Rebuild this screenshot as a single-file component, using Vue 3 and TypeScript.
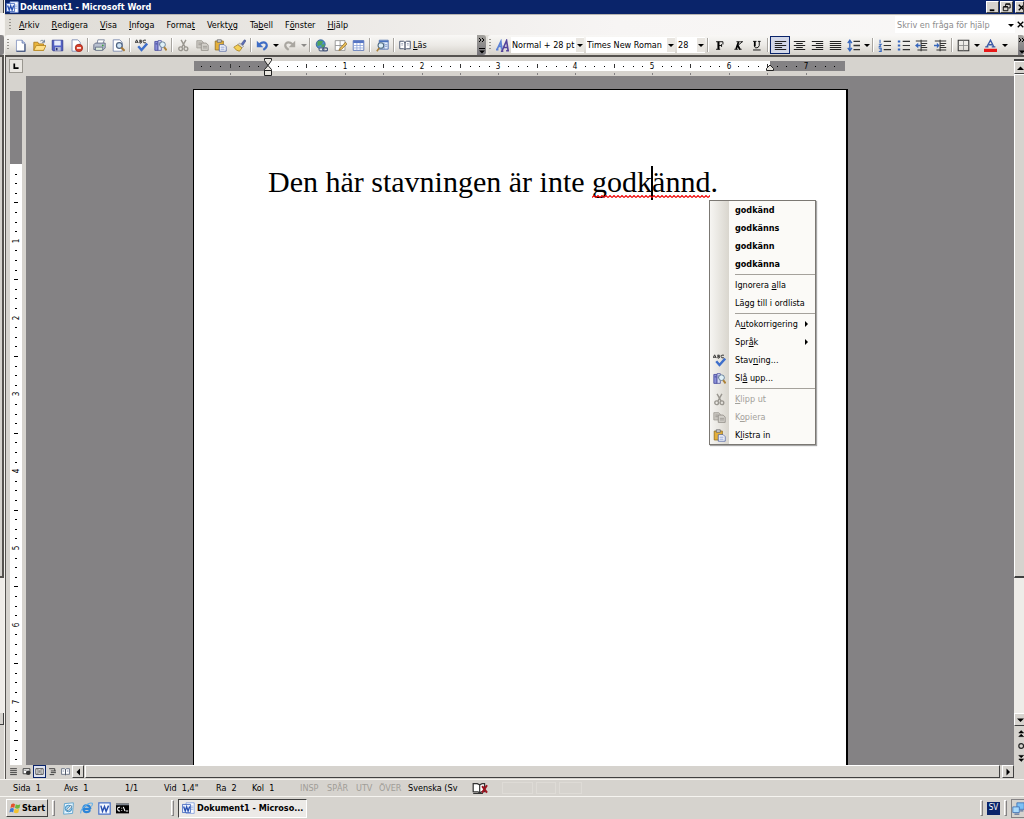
<script setup lang="ts">
import { ref } from 'vue'

interface ToolButton { icon: string; title: string; drop?: boolean; wide?: boolean; active?: boolean; off?: boolean }
interface ToolGroup { name: string; items: ToolButton[] }
interface MenuEntry { label: string; bold?: boolean; sub?: boolean; off?: boolean; icon?: string }
interface Mark { pos: number; kind: 'num' | 'half' | 'dot'; text: string }

const menus = ['&Arkiv', '&Redigera', '&Visa', '&Infoga', 'Forma&t', 'Verkt&yg', 'Ta&bell', 'F&önster', '&Hjälp']

const standard: ToolGroup[] = [
  { name: 'four', items: [
    { icon: 'new', title: 'Nytt' }, { icon: 'open', title: 'Öppna' },
    { icon: 'save', title: 'Spara' }, { icon: 'perm', title: 'Behörighet' } ] },
  { name: 'two', items: [{ icon: 'print', title: 'Skriv ut' }, { icon: 'preview', title: 'Förhandsgranska' }] },
  { name: 'two', items: [{ icon: 'spell', title: 'Stavning' }, { icon: 'research', title: 'Referensmaterial' }] },
  { name: 'four', items: [
    { icon: 'cut', title: 'Klipp ut', off: true }, { icon: 'copy', title: 'Kopiera', off: true },
    { icon: 'paste', title: 'Klistra in' }, { icon: 'brush', title: 'Hämta format' } ] },
  { name: 'undo', items: [
    { icon: 'undo', title: 'Ångra', drop: true }, { icon: 'redo', title: 'Gör om', drop: true, off: true } ] },
  { name: 'three', items: [
    { icon: 'link', title: 'Hyperlänk' }, { icon: 'draw', title: 'Tabeller och kantlinjer' },
    { icon: 'table', title: 'Infoga tabell' } ] },
  { name: 'one', items: [{ icon: 'docmap', title: 'Dokumentöversikt' }] }
]

const formatting: ToolGroup[] = [
  { name: 'font', items: [
    { icon: 'bold', title: 'Fet' }, { icon: 'italic', title: 'Kursiv' }, { icon: 'under', title: 'Understruken' } ] },
  { name: 'align', items: [
    { icon: 'left', title: 'Vänsterjustera', active: true }, { icon: 'center', title: 'Centrera' },
    { icon: 'right', title: 'Högerjustera' }, { icon: 'justify', title: 'Marginaljustera' },
    { icon: 'spacing', title: 'Radavstånd', drop: true } ] },
  { name: 'four', items: [
    { icon: 'numbers', title: 'Numrerad lista' }, { icon: 'bullets', title: 'Punktlista' },
    { icon: 'outdent', title: 'Minska indrag' }, { icon: 'indent', title: 'Öka indrag' } ] },
  { name: 'undo', items: [
    { icon: 'borders', title: 'Kantlinje', drop: true }, { icon: 'color', title: 'Teckenfärg', drop: true } ] }
]

const context: MenuEntry[][] = [
  [{ label: 'godkänd', bold: true }, { label: 'godkänns', bold: true },
    { label: 'godkänn', bold: true }, { label: 'godkänna', bold: true }],
  [{ label: 'Ignorera &alla' }, { label: 'Lägg till i ordlista' }],
  [{ label: 'A&utokorrigering', sub: true }, { label: 'Spr&åk', sub: true },
    { label: 'Stav&ning...', icon: 'spell' }, { label: 'Sl&å upp...', icon: 'research' }],
  [{ label: '&Klipp ut', off: true, icon: 'cut' }, { label: 'K&opiera', off: true, icon: 'copy' },
    { label: 'K&listra in', icon: 'paste' }]
]

const views = ['v-normal', 'v-web', 'v-print', 'v-outline', 'read']
const viewNames = ['Normal', 'Webblayout', 'Utskriftslayout', 'Disposition', 'Läslayout']
const launch = ['desktop', 'ie', 'word', 'cmd']
const launchNames = ['Visa skrivbordet', 'Internet Explorer', 'Word', 'Kommandotolken']
const status = ['Sida  1', 'Avs  1', '1/1', 'Vid  1,4"', 'Ra  2', 'Kol  1']
const modes = ['INSP', 'SPÅR', 'UTV', 'ÖVER']

const styleName = ref('Normal + 28 pt')
const fontName = ref('Times New Roman')
const fontSize = ref('28')
const question = ref('')

function parts(label: string): string[] {
  const i = label.indexOf('&')
  return i < 0 ? [label, '', ''] : [label.slice(0, i), label[i + 1], label.slice(i + 2)]
}

const inch = 76.8
function marks(origin: number, from: number, to: number): Mark[] {
  const out: Mark[] = []
  for (let k = from; k <= to; k++) {
    if (k === 0) continue
    const kind = k % 8 === 0 ? 'num' : k % 4 === 0 ? 'half' : 'dot'
    out.push({ pos: Math.round(origin + (k * inch) / 8), kind, text: String(Math.abs(k / 8)) })
  }
  return out
}
const across = marks(74, -7, 59)
const down = marks(73, 1, 63)
</script>

<template>
  <div class="screen">
    <svg class="defs" aria-hidden="true">
      <symbol id="new" viewBox="0 0 16 16"><path d="M3 1.500h7l3.500 3.500v10h-10.500z" fill="#fff" stroke="#7f8fbd" /><path d="M10 1.500v3.500h3.500" fill="#c9d6f2" stroke="#5b6fa5" /><path d="M3 15h10.500V6" fill="none" stroke="#33456f" stroke-width="1.300" /></symbol>
      <symbol id="open" viewBox="0 0 16 16"><path d="M1 14V4h5l1 2h6v8z" fill="#e9b43c" stroke="#a9781a" /><path d="M1 14l3-6h12l-3 6z" fill="#ffe08a" stroke="#b3841f" /><path d="M9 2.500c2-1.500 4-1 5 1.500M14 1v3h-3" fill="none" stroke="#5b6f8a" /></symbol>
      <symbol id="save" viewBox="0 0 16 16"><path d="M1.500 1.500h13v13h-12l-1-1z" fill="#5360c4" stroke="#303a8e" /><path d="M4 2h8v6H4z" fill="#e6ebfb" /><path d="M5 10h7v4.500H5z" fill="#b9bfd6" /><path d="M6 11h2v3H6z" fill="#2b3377" /></symbol>
      <symbol id="perm" viewBox="0 0 16 16"><path d="M2.500 1h7l3 3v11h-10z" fill="#fff" stroke="#7181ac" /><circle cx="11" cy="11" r="4.500" fill="#d8402c" stroke="#9d2517" /><path d="M8.500 11h5" stroke="#fff" stroke-width="2" /></symbol>
      <symbol id="print" viewBox="0 0 16 16"><path d="M5 6l1-5h8l-2 5z" fill="#fff" stroke="#6b7690" /><path d="M1 7l2-2h12v6l-2 2H1z" fill="#b8c0cf" stroke="#59647e" /><path d="M3 10h9v4H3z" fill="#dcebd9" stroke="#59647e" /><path d="M11 8h2" stroke="#3c9c3c" stroke-width="2" /></symbol>
      <symbol id="preview" viewBox="0 0 16 16"><path d="M1.500 1h8l3 3v11h-11z" fill="#fff" stroke="#6f7fa8" /><circle cx="9" cy="8" r="3.500" fill="#cfe4f6" stroke="#4f6380" stroke-width="1.500" /><path d="M11.500 10.500l4 4" stroke="#a97a35" stroke-width="2.400" /></symbol>
      <symbol id="spell" viewBox="0 0 16 16"><path d="M0 5l2-4 2 4M1 4h2.500M6 1v4M6 1.500h2q1.500 1 0 1.500H6.500q3 1 1 2H6M13.500 1.500q-3.500-1-3.500 1.500t3.500 1.700" fill="none" stroke="#343434" stroke-width="1.200" /><path d="M4 9l4 4.500L15 5.500" fill="none" stroke="#3e6fcb" stroke-width="3" /></symbol>
      <symbol id="research" viewBox="0 0 16 16"><path d="M1 3h4v11H1z" fill="#8a8fd8" stroke="#45499c" /><path d="M5 2h4v12H5z" fill="#d9dcf6" stroke="#5357a3" /><path d="M2 6h2M6 5h2M6 7h2" stroke="#343a82" /><circle cx="10.500" cy="7" r="3.500" fill="#dff0f8" stroke="#55708a" /><path d="M12.500 10l3 4" stroke="#ad8238" stroke-width="2.300" /></symbol>
      <symbol id="cut" viewBox="0 0 16 16"><path d="M5 1l5 9M11 1L6 10" stroke="#99968f" stroke-width="1.700" /><circle cx="4.500" cy="12" r="2.300" fill="none" stroke="#99968f" stroke-width="1.700" /><circle cx="11" cy="12" r="2.300" fill="none" stroke="#99968f" stroke-width="1.700" /></symbol>
      <symbol id="copy" viewBox="0 0 16 16"><path d="M1 2h6l2 2v7H1z" fill="#c9c6c0" stroke="#a09d96" /><path d="M6.500 5h6l2.500 2.500V14H6.500z" fill="#d3d0ca" stroke="#908d86" /><path d="M3 5h3M3 7h3M8.500 9h5M8.500 11h5" stroke="#96938c" /></symbol>
      <symbol id="paste" viewBox="0 0 16 16"><path d="M1.500 2.500h10v11h-10z" fill="#e5b03a" stroke="#94701f" /><path d="M4 1h5v3H4z" fill="#d7d9e1" stroke="#666" /><path d="M6.500 7h6l2.500 2.500V15H6.500z" fill="#fff" stroke="#4d63a3" /><path d="M8 10h5M8 12.500h5" stroke="#6d86c9" /></symbol>
      <symbol id="brush" viewBox="0 0 16 16"><path d="M10 6l4-5 2 1-4 6z" fill="#5c6eb8" stroke="#3b4780" stroke-width=".7" /><path d="M8 5l5 4-2 2-5-4z" fill="#d8d8dc" stroke="#777" stroke-width=".7" /><path d="M6 7l5 4-3 4q-4 0-7-5z" fill="#f4cf55" stroke="#a9822a" /></symbol>
      <symbol id="undo" viewBox="0 0 16 16"><path d="M4 6.500q5-4 8.500-1 2.500 4-3.500 8" fill="none" stroke="#3f6dc5" stroke-width="2.600" /><path d="M1 2v8h8z" fill="#3f6dc5" /></symbol>
      <symbol id="redo" viewBox="0 0 16 16"><path d="M12 6.500q-5-4-8.500-1-2.500 4 3.500 8" fill="none" stroke="#aaa7a1" stroke-width="2.600" /><path d="M15 2v8H7z" fill="#aaa7a1" /></symbol>
      <symbol id="link" viewBox="0 0 16 16"><circle cx="7" cy="6.500" r="5.500" fill="#4d8ccf" stroke="#2f5c93" /><path d="M3 3q3-2 7 0l-2 4-3 1-2 1zM8 7l4-1-1 4-3 1z" fill="#50a45a" /><rect x="5" y="11" width="6" height="3.500" rx="1.700" fill="#e8ecf4" stroke="#63718e" stroke-width="1.500" /><rect x="9.500" y="11" width="6" height="3.500" rx="1.700" fill="none" stroke="#44557c" stroke-width="1.500" /></symbol>
      <symbol id="draw" viewBox="0 0 16 16"><path d="M1.500 2h12v12h-12zM1.500 8h12M7.500 2v12" fill="#fff" stroke="#8a8a8a" /><path d="M7 12l7-8 2 2-7 7-3 1z" fill="#eac05a" stroke="#94702b" /></symbol>
      <symbol id="table" viewBox="0 0 16 16"><path d="M1.500 2h13v12h-13z" fill="#fff" stroke="#4865b2" /><path d="M1.500 2h13v3h-13z" fill="#5575c4" /><path d="M1.500 8h13M1.500 11h13M6 5v9M10 5v9" stroke="#8ea5da" /></symbol>
      <symbol id="docmap" viewBox="0 0 16 16"><path d="M4 1.500h11v11H4z" fill="#e4eefb" stroke="#4365a9" /><path d="M4 3h11" stroke="#4a72bd" stroke-width="2" /><path d="M10 5v8M11 7h3M11 9h3" stroke="#7692c6" /><circle cx="6" cy="8" r="3.500" fill="#dceef7" stroke="#4f6a82" stroke-width="1.300" /><path d="M4 11l-3 4" stroke="#ad8238" stroke-width="2" /></symbol>
      <symbol id="read" viewBox="0 0 16 16"><path d="M1 3h5l2 1.500L10 3h5v10h-5l-2 1-2-1H1z" fill="#fff" stroke="#4a5670" stroke-width="1.300" /><path d="M8 4v10" stroke="#333c50" stroke-width="1.500" /><path d="M3 6h2.500M3 8h2.500M10.500 6H13M10.500 8H13" stroke="#8f99b0" /></symbol>
      <symbol id="styles" viewBox="0 0 16 16"><path d="M0 13h3M1.500 12.500L6 3l1 10M3 9h5" fill="none" stroke="#5b82d6" stroke-width="2" /><path d="M6 15h3M7.500 14.500L13 2l2 12.500M9.500 10.500H15M12.500 14.500H16" fill="none" stroke="#54459c" stroke-width="2" /></symbol>
      <symbol id="bold" viewBox="0 0 16 16"><path d="M3 2.500h10v4M3 13.500h6M7 8h4M11 6v4" fill="none" stroke="#000" stroke-width="1.300" /><path d="M6.500 2.500v11" stroke="#000" stroke-width="3" /></symbol>
      <symbol id="italic" viewBox="0 0 16 16"><path d="M5 2.500h5M10.500 2.500h4M2 13.500h5M8.500 13.500h4" stroke="#000" stroke-width="1.300" /><path d="M8 3L4.500 13M7 8l3 5.500" fill="none" stroke="#000" stroke-width="2.500" /><path d="M13 3L7 8" stroke="#000" stroke-width="1.300" /></symbol>
      <symbol id="under" viewBox="0 0 16 16"><path d="M3 2h5M10 2h4M12 2v6q-1 4-5 3.500-2-.5-2-3.500" fill="none" stroke="#000" stroke-width="1.300" /><path d="M5.500 2v7" stroke="#000" stroke-width="2.600" /><path d="M3 14.500h11" stroke="#000" stroke-width="1.300" /></symbol>
      <symbol id="left" viewBox="0 0 16 16"><path d="M1 3h14M1 5.500h9M1 8h14M1 10.500h9M1 13h14" stroke="#222" stroke-width="1.300" /></symbol>
      <symbol id="center" viewBox="0 0 16 16"><path d="M1 3h14M4 5.500h8M1 8h14M4 10.500h8M1 13h14" stroke="#222" stroke-width="1.300" /></symbol>
      <symbol id="right" viewBox="0 0 16 16"><path d="M1 3h14M6 5.500h9M1 8h14M6 10.500h9M1 13h14" stroke="#222" stroke-width="1.300" /></symbol>
      <symbol id="justify" viewBox="0 0 16 16"><path d="M1 3h14M1 5.500h14M1 8h14M1 10.500h14M1 13h14" stroke="#222" stroke-width="1.300" /></symbol>
      <symbol id="spacing" viewBox="0 0 16 16"><path d="M3.500 2v12M1 5l2.500-3.500L6 5M1 11l2.500 3.500L6 11" fill="none" stroke="#3767bd" stroke-width="1.700" /><path d="M8 3h8M8 8h8M8 13h8" stroke="#333" stroke-width="1.600" /></symbol>
      <symbol id="numbers" viewBox="0 0 16 16"><path d="M2.500 1v4M1 6.500h3L1.500 9.500H4M1 11.500h3v4H1M2 13.500h2" fill="none" stroke="#3767bd" stroke-width="1.300" /><path d="M7 3h9M7 8h9M7 13h9" stroke="#333" stroke-width="1.500" /></symbol>
      <symbol id="bullets" viewBox="0 0 16 16"><path d="M1 3h3M1 8h3M1 13h3" stroke="#3767bd" stroke-width="2.600" /><path d="M7 3h9M7 8h9M7 13h9" stroke="#333" stroke-width="1.500" /></symbol>
      <symbol id="outdent" viewBox="0 0 16 16"><path d="M1 2.500h14M8 5.500h7M8 8h5M8 10.500h7M3 13.500h12M7.500 1v14" stroke="#333" stroke-width="1.300" /><path d="M0 8l4-3.500V7h3v2H4v2.500z" fill="#3767bd" /></symbol>
      <symbol id="indent" viewBox="0 0 16 16"><path d="M1 2.500h14M8 5.500h7M8 8h5M8 10.500h7M3 13.500h12M7.500 1v14" stroke="#333" stroke-width="1.300" /><path d="M7 8L3.500 4.500V7H0v2h3.500v2.500z" fill="#3767bd" /></symbol>
      <symbol id="borders" viewBox="0 0 16 16"><path d="M1.500 1.500h13v13h-13z" fill="none" stroke="#333" stroke-width="1.300" /><path d="M8 2v12M2 8h12" stroke="#888" /></symbol>
      <symbol id="color" viewBox="0 0 16 16"><path d="M3.500 9.500L8 1.500l4 8M5 7h6M1.500 9.700h4M9.500 9.700h4.500" fill="none" stroke="#3c5aa6" stroke-width="1.700" /><path d="M0 12h16v4H0z" fill="#e81818" /></symbol>
      <symbol id="word" viewBox="0 0 16 16"><path d="M5 1h10v13H5z" fill="#fff" stroke="#7f9bdc" /><path d="M11 5h3M11 7h3M11 9h3" stroke="#8fa8e0" /><path d="M.5 3h10v10H.5z" fill="#e9f0ff" stroke="#3c62bb" /><path d="M2 5.500l2 5.500 1.700-5L7.500 11l2-5.500" fill="none" stroke="#2850b0" stroke-width="1.700" /></symbol>
      <symbol id="wordapp" viewBox="0 0 16 16"><path d="M1 1h14v14H1z" fill="#f4f8ff" stroke="#4a72c8" stroke-width="1.500" /><path d="M3.500 4.500l2 7L8 5.500l2 6 3-7" fill="none" stroke="#2850b0" stroke-width="1.800" /></symbol>
      <symbol id="desktop" viewBox="0 0 16 16"><path d="M3 2l11-1-1 13-11 1z" fill="#e5f4fd" stroke="#4e9ccb" /><circle cx="8" cy="8" r="4" fill="#9ed2f0" stroke="#2d7fb8" /><path d="M6 9l5-5 1 2-5 5z" fill="#fff" stroke="#4e7895" /></symbol>
      <symbol id="ie" viewBox="0 0 16 16"><path d="M13 8.500H4q0-4.500 4-4.500t5 4.500M4 8.500q.5 4 4 4 3 0 4.500-2.500" fill="none" stroke="#2b84d8" stroke-width="2.600" /><path d="M1 14q-1-4 5-9t9-3.500q1 1-1 4" fill="none" stroke="#62b0ea" stroke-width="1.300" /></symbol>
      <symbol id="cmd" viewBox="0 0 16 16"><path d="M0 2h16v12H0z" fill="#000" /><path d="M0 2h16v2H0z" fill="#7d8590" /><path d="M5 6.500Q2 6 2 8.500T5 11M7 7v1M7 10v1M9 6l2 5M12 11h3" fill="none" stroke="#fff" stroke-width="1.300" /></symbol>
      <symbol id="flag" viewBox="0 0 16 16"><path d="M3 3q3-2 5 0L7 8Q5 6 2 8z" fill="#e3522c" /><path d="M9 3q3 2 6 0l-1 5q-3 2-6 0z" fill="#6eb53c" /><path d="M1.500 9q3-2 5 0l-1 5q-2-2-5 0z" fill="#3c78d2" /><path d="M7.500 9q3 2 6 0l-1 5q-3 2-6 0z" fill="#f3c22e" /></symbol>
      <symbol id="proof" viewBox="0 0 20 16"><path d="M1 2h5l3 1.500L12 2h3v10h-4l-2 1.500L7 12H1z" fill="#fff" stroke="#333" stroke-width="1.500" /><path d="M9 3v10M1 14h12" stroke="#333" stroke-width="1.500" /><path d="M12 5l6 8M18 4l-6 9" stroke="#9c1420" stroke-width="2.500" /></symbol>
      <symbol id="net" viewBox="0 0 16 16"><path d="M6 1h9v8H6z" fill="#7cc0f5" stroke="#3a6cb3" /><path d="M1 6h8v7H1z" fill="#a9dafc" stroke="#3a6cb3" /><path d="M3 15h6M10 11h4" stroke="#5a7198" stroke-width="1.500" /></symbol>
      <symbol id="v-normal" viewBox="0 0 16 16"><path d="M2 3h12M2 6.500h12M2 10h12M2 13.500h12" stroke="#333" stroke-width="1.600" /></symbol>
      <symbol id="v-web" viewBox="0 0 16 16"><path d="M2 3h12v9H2z" fill="#fff" stroke="#333" stroke-width="1.600" /><circle cx="11" cy="10" r="4" fill="#333" /><path d="M4 6h4" stroke="#333" /></symbol>
      <symbol id="v-print" viewBox="0 0 16 16"><path d="M1.500 3h13v10h-13z" fill="#fff" stroke="#333" stroke-width="1.500" /><path d="M5 3v10M11 3v10M6 6h4M6 8h4M6 10h4" stroke="#333" /></symbol>
      <symbol id="v-outline" viewBox="0 0 16 16"><path d="M2 3h10M5 7h9M5 10h9M3 13.500h8" stroke="#333" stroke-width="1.600" /><path d="M12 3v4" stroke="#333" stroke-width="1.600" /></symbol>
      <symbol id="drop" viewBox="0 0 8 8"><path d="M1 3h6L4 6z" fill="#000" /></symbol>
    </svg>

    <div class="upper">
      <div class="behind" aria-hidden="true">
        <i class="b-title"></i><i class="b-menu"></i><i class="b-tools"></i><i class="b-thumb"></i><i class="b-track"></i><i class="b-down"></i><i class="b-rest"></i>
      </div>

      <main class="window">
        <header class="title">
          <svg class="ico"><use href="#word" /></svg>
          <h1>Dokument1 - Microsoft Word</h1>
          <div class="caption">
            <button type="button" aria-label="Minimera"><svg viewBox="0 0 12 12"><path d="M3 9h5" stroke="#000" stroke-width="2" /></svg></button>
            <button type="button" aria-label="Återställ"><svg viewBox="0 0 12 12"><path d="M5 5V2.500h5v4H8M2.500 5.500h5v4h-5zM5 2h5M2.500 5h5" fill="none" stroke="#000" /></svg></button>
            <button type="button" aria-label="Stäng" class="last"><svg viewBox="0 0 12 12"><path d="M3 3l6 6M9 3L3 9" stroke="#000" stroke-width="1.500" /></svg></button>
          </div>
        </header>

        <nav class="menubar">
          <i class="grip"></i>
          <button v-for="m in menus" :key="m" type="button">{{ parts(m)[0] }}<u>{{ parts(m)[1] }}</u>{{ parts(m)[2] }}</button>
          <label class="ask">
            <input v-model="question" type="text" placeholder="Skriv en fråga för hjälp" aria-label="Skriv en fråga för hjälp" />
            <svg class="arrow"><use href="#drop" /></svg>
          </label>
          <button type="button" class="docclose" aria-label="Stäng dokumentet"><svg viewBox="0 0 12 12"><path d="M3 3l6 6M9 3L3 9" stroke="#000" stroke-width="1.500" /></svg></button>
        </nav>

        <div class="tools">
          <div class="bar first">
            <i class="grip"></i>
            <template v-for="(g, gi) in standard" :key="gi">
              <div class="group" :class="g.name">
                <template v-for="b in g.items" :key="b.icon">
                  <button type="button" class="tool" :title="b.title" :disabled="b.off"><svg class="ico"><use :href="'#' + b.icon" /></svg></button>
                  <button v-if="b.drop" type="button" class="more" :class="{ off: b.off }" :aria-label="b.title + ', fler'"><svg class="arrow"><use href="#drop" /></svg></button>
                </template>
              </div>
              <i class="sep"></i>
            </template>
            <button type="button" class="readbtn"><svg><use href="#read" /></svg><span><u>L</u>äs</span></button>
          </div>
          <button type="button" class="overflow" aria-label="Verktygsfältsalternativ"><svg viewBox="0 0 8 19"><path d="M1 2l2 2-2 2M4 2l2 2-2 2" fill="none" stroke="#000" /><path d="M1 12.500h6" stroke="#000" /><path d="M1 14.500h6L4 17.500z" fill="#000" /></svg></button>
          <div class="bar">
            <i class="grip"></i>
            <button type="button" class="tool styles" title="Formatmallar"><svg class="ico"><use href="#styles" /></svg></button>
            <label class="combo c-style"><select v-model="styleName" aria-label="Formatmall"><option>Normal + 28 pt</option></select><svg class="arrow"><use href="#drop" /></svg></label>
            <label class="combo c-font"><select v-model="fontName" aria-label="Teckensnitt"><option>Times New Roman</option></select><svg class="arrow"><use href="#drop" /></svg></label>
            <label class="combo c-size"><select v-model="fontSize" aria-label="Teckenstorlek"><option>28</option></select><svg class="arrow"><use href="#drop" /></svg></label>
            <template v-for="(g, gi) in formatting" :key="gi">
              <i class="sep"></i>
              <div class="group" :class="g.name">
                <template v-for="b in g.items" :key="b.icon">
                  <button type="button" class="tool" :class="{ active: b.active }" :title="b.title"><svg class="ico"><use :href="'#' + b.icon" /></svg></button>
                  <button v-if="b.drop" type="button" class="more" :aria-label="b.title + ', fler'"><svg class="arrow"><use href="#drop" /></svg></button>
                </template>
              </div>
            </template>
          </div>
          <button type="button" class="overflow" aria-label="Fler knappar"><svg viewBox="0 0 8 19"><path d="M1 2l2 2-2 2M4 2l2 2-2 2" fill="none" stroke="#000" /><path d="M1 14.500h6L4 17.500z" fill="#000" /></svg></button>
        </div>

        <div class="work">
          <div class="left">
            <button type="button" class="tab" aria-label="Vänstertabb"><svg viewBox="0 0 14 14"><path d="M5 4v5.500h5" fill="none" stroke="#000" stroke-width="2" /></svg></button>
            <svg class="vruler" aria-hidden="true">
              <rect width="12" height="73" fill="#848284" />
              <rect y="73" width="12" height="100%" fill="#fff" />
              <template v-for="m in down" :key="m.pos">
                <text v-if="m.kind === 'num'" :transform="'translate(9 ' + m.pos + ') rotate(-90)'" text-anchor="middle">{{ m.text }}</text>
                <rect v-else-if="m.kind === 'half'" x="4" :y="m.pos" width="4" height="1" />
                <rect v-else x="5" :y="m.pos" width="2" height="1" />
              </template>
            </svg>
          </div>

          <div class="center-col">
            <div class="hruler-row">
              <svg class="hruler" aria-hidden="true">
                <rect y="4" width="651" height="10" fill="#848284" />
                <rect x="74" y="4" width="502" height="10" fill="#fff" />
                <template v-for="m in across" :key="m.pos">
                  <text v-if="m.kind === 'num' && m.pos > 74" :x="m.pos" y="12" text-anchor="middle">{{ m.text }}</text>
                  <rect v-else-if="m.kind !== 'dot'" :x="m.pos" y="7" width="1" height="4" fill="#333" />
                  <rect v-else :x="m.pos" y="9" width="1" height="1" />
                  <rect v-if="m.kind !== 'dot'" :x="m.pos" y="16" width="1" height="2" fill="#848284" />
                </template>
                <path d="M70.500 1.500h7v2L74 8.500l-3.500-5zM70.500 13.500v-1L74 8.500l3.500 4v1zM70.500 13.500h7v5h-7z" fill="#e8e5df" stroke="#222" />
                <path d="M572.500 13.500v-2l3.500-3.500 3.500 3.500v2z" fill="#e8e5df" stroke="#222" />
              </svg>
            </div>
            <div class="canvas">
              <article class="page">
                <p>Den här stavningen är inte <span class="wrong">godk<i class="caret"></i>ännd<svg class="squiggle" aria-hidden="true"><defs><pattern id="zig" width="4" height="3" patternUnits="userSpaceOnUse"><path d="M0 2.500L2 .5l2 2" fill="none" stroke="#f00000" stroke-width="1.100" /></pattern></defs><rect width="100%" height="3" fill="url(#zig)" /></svg></span>.</p>
                <div class="context" role="menu">
                  <ul v-for="(section, si) in context" :key="si">
                    <li v-for="e in section" :key="e.label">
                      <button type="button" role="menuitem" :disabled="e.off" :class="{ strong: e.bold }">
                        <span class="slot"><svg v-if="e.icon" class="ico"><use :href="'#' + e.icon" /></svg></span>
                        <span class="label">{{ parts(e.label)[0] }}<u>{{ parts(e.label)[1] }}</u>{{ parts(e.label)[2] }}</span>
                        <svg v-if="e.sub" class="sub" viewBox="0 0 6 8"><path d="M1 1v6l3-3z" fill="#000" /></svg>
                      </button>
                    </li>
                  </ul>
                </div>
              </article>
            </div>
          </div>

          <div class="vscroll">
            <i class="split"></i>
            <button type="button" class="raised" aria-label="Uppåt"><svg viewBox="0 0 10 10"><path d="M2 7h7L5.500 3.500z" fill="#000" /></svg></button>
            <div class="vthumb"></div>
            <div class="vtrack"></div>
            <button type="button" class="raised" aria-label="Nedåt"><svg viewBox="0 0 10 10"><path d="M2 3.500h7L5.500 7z" fill="#000" /></svg></button>
            <button type="button" class="browse" aria-label="Föregående sida"><svg viewBox="0 0 10 10"><path d="M4 5l2-2 2 2zM4 8l2-2 2 2z" fill="#000" stroke="#000" stroke-width=".5" /></svg></button>
            <button type="button" class="browse" aria-label="Välj bläddringsobjekt"><svg viewBox="0 0 10 10"><circle cx="6" cy="5" r="2" fill="none" stroke="#222" /></svg></button>
            <button type="button" class="browse" aria-label="Nästa sida"><svg viewBox="0 0 10 10"><path d="M4 2h4L6 4zM4 5h4L6 7z" fill="#000" stroke="#000" stroke-width=".5" /></svg></button>
          </div>
        </div>

        <div class="hscroll">
          <button v-for="(v, i) in views" :key="v" type="button" class="view" :class="{ on: i === 2 }" :aria-label="viewNames[i]"><svg><use :href="'#' + v" /></svg></button>
          <button type="button" class="raised" aria-label="Vänster"><svg viewBox="0 0 10 10"><path d="M7 1.500v7L3.500 5z" fill="#000" /></svg></button>
          <div class="hthumb"></div>
          <button type="button" class="raised" aria-label="Höger"><svg viewBox="0 0 10 10"><path d="M3.500 1.500v7L7 5z" fill="#000" /></svg></button>
        </div>
      </main>
    </div>

    <footer class="status">
      <span v-for="s in status" :key="s">{{ s }}</span>
      <span v-for="s in modes" :key="s" class="mode">{{ s }}</span>
      <span>Svenska (Sv</span>
      <span class="proof"><svg><use href="#proof" /></svg></span>
      <span class="empty"></span><span class="empty"></span><span class="empty"></span>
    </footer>

    <footer class="taskbar">
      <button type="button" class="start"><svg><use href="#flag" /></svg>Start</button>
      <i class="divider"></i>
      <div class="launch">
        <button v-for="(l, i) in launch" :key="l" type="button" :aria-label="launchNames[i]"><svg class="ico"><use :href="'#' + (l === 'word' ? 'wordapp' : l)" /></svg></button>
      </div>
      <i class="divider"></i>
      <button type="button" class="task"><svg class="ico"><use href="#word" /></svg>Dokument1 - Microso...</button>
      <div class="tray">
        <i class="divider"></i>
        <button type="button" class="lang">SV</button>
        <i class="divider"></i>
        <div class="net"><svg class="ico"><use href="#net" /></svg></div>
      </div>
    </footer>
  </div>
</template>

<style>
body { margin: 0; overflow: hidden; background: #d6d3ce; }
</style>

<style scoped>
.screen {
  height: 100vh;
  display: flex;
  flex-direction: column;
  overflow: hidden;
  background: #d6d3ce;
  color: #000;
  font: 9px/12px "DejaVu Sans Condensed", "DejaVu Sans", sans-serif;
}
.screen * { box-sizing: border-box; }
.defs { position: absolute; width: 0; height: 0; }
button, input, select { margin: 0; padding: 0; border: 0; background: none; color: inherit; font: inherit; border-radius: 0; outline: 0; }
button { display: flex; align-items: center; justify-content: center; white-space: nowrap; flex: none; }
svg { display: block; flex: none; }
.ico { width: 13px; height: 13px; }
.arrow { width: 8px; height: 8px; }

.upper { flex: 1; min-height: 0; display: flex; }
.behind { width: 5px; flex: none; display: flex; flex-direction: column; border-right: 1px solid #f4f2ee; background: #d6d3ce; }
.behind i { display: block; }
.b-title { height: 13px; border-right: 1px solid #404040; }
.b-menu { height: 22px; background: #f6f4f2; }
.b-tools { height: 20px; background: #848284; border-radius: 0 3px 3px 0; }
.b-thumb { flex: 521; border: solid #55524f; border-width: 2px 2px 2px 0; }
.b-track { flex: 136; background: #efece8; }
.b-down { height: 12px; border: solid #404040; border-width: 0 1px 1px 0; }
.b-rest { height: 54px; }

.window { flex: 1; min-width: 0; display: flex; flex-direction: column; }
.title { height: 14px; flex: none; display: flex; align-items: center; gap: 1px; padding-left: 1px; background: #0a246a; color: #fff; }
.title h1 { margin: 0; flex: 1; font-size: 9px; line-height: 14px; font-weight: bold; }
.caption { display: flex; gap: 1px; align-self: stretch; padding: 1px 0; }
.caption button { width: 13px; background: #d6d3ce; border: solid; border-width: 1px; border-color: #fff #404040 #404040 #fff; }
.caption .last { width: 9px; margin-left: 1px; justify-content: flex-start; overflow: hidden; }
.caption svg { width: 11px; height: 11px; }

.menubar { height: 21px; flex: none; display: flex; align-items: center; padding: 0 0 1px 3px; background: linear-gradient(90deg, #dedbd5, #f7f5f4 60%, #f9f8f7); border-top: 1px solid #b8b5b0; }
.grip { width: 2px; height: 12px; flex: none; margin: 0 2px 0 1px; background: repeating-linear-gradient(#97948e 0 1px, transparent 1px 3px); }
.menubar button { padding: 0 6px; height: 18px; }
.ask { margin-left: auto; width: 120px; height: 17px; display: flex; align-items: center; background: #fff; }
.ask input { flex: 1; min-width: 0; padding-left: 2px; }
.ask input::placeholder { color: #8b8b8b; opacity: 1; }
.menubar .docclose { padding: 0; width: 9px; justify-content: flex-start; overflow: hidden; }
.docclose svg { width: 11px; height: 11px; }

.tools { height: 20px; flex: none; display: flex; background: #e4e1db; overflow: hidden; }
.bar { display: flex; align-items: center; flex: 1; min-width: 0; background: linear-gradient(#f9f8f6, #eceae6 50%, #d3d0c9); border-radius: 3px 0 0 3px; }
.bar.first { flex: none; width: 472px; padding-left: 1px; }
.group { display: flex; flex: none; height: 18px; }
.tool { flex: 1; height: 18px; }
.tool.active { background: #d3d8e8; border: 1px solid #0a246a; }
.more { width: 9px; }
.more.off { opacity: .4; }
.four { width: 75px; }
.two { width: 38px; }
.undo { width: 55px; }
.three { width: 56px; }
.one { width: 20px; }
.font { width: 56px; }
.font .ico { width: 11px; height: 11px; }
.align { width: 101px; }
.sep { width: 4px; height: 14px; flex: none; background: linear-gradient(90deg, transparent 1px, #a8a5a0 1px 2px, #fff 2px 3px, transparent 3px); }
.readbtn { gap: 2px; padding: 0 3px; }
.readbtn svg { width: 12px; height: 12px; }
.overflow { width: 9px; background: linear-gradient(#a3a19d, #77757a); border-radius: 0 3px 3px 0; margin-right: 2px; }
.overflow:last-child { width: 6px; margin: 0; justify-content: flex-start; overflow: hidden; }
.overflow svg { width: 8px; height: 19px; }
.styles { flex: none; width: 18px; }
.combo { display: grid; align-items: center; height: 16px; background: #fff; margin-right: 2px; flex: none; }
.combo select, .combo .arrow { grid-area: 1 / 1; }
.combo select { appearance: none; width: 100%; height: 16px; padding-left: 1px; opacity: 1; }
.combo .arrow { justify-self: end; width: 8px; height: 14px; background: #e9e6e1; pointer-events: none; }
.c-style { width: 73px; }
.c-font { width: 89px; }
.c-size { width: 28px; margin-right: 1px; }

.work { flex: 1; min-height: 0; display: flex; border-top: 2px solid #55524f; border-left: 1px solid #55524f; }
.left { width: 20px; flex: none; display: flex; flex-direction: column; align-items: center; padding-top: 2px; }
.tab { width: 14px; height: 14px; border: 1px solid #9a9790; background: #e9e6e1; align-self: flex-start; margin-left: 3px; }
.tab svg { width: 12px; height: 12px; }
.vruler { width: 12px; flex: 1 1 0; min-height: 0; margin-top: 18px; }
.vruler text, .hruler text { font-size: 8px; fill: #000; }
.center-col { flex: 1; min-width: 0; display: flex; flex-direction: column; }
.hruler-row { height: 19px; flex: none; display: flex; justify-content: center; }
.hruler { width: 652px; height: 19px; overflow: visible; }
.canvas { flex: 1; min-height: 0; display: flex; justify-content: center; background: #848284; padding-top: 13px; border-left: 1px solid #848284; }
.page { position: relative; width: 655px; background: #fff; border: solid #000; border-width: 1px 2px 0 1px; padding: 74px 75px 0 74px; }
.page p { margin: 0; font: 30px/36px "Liberation Serif", "Times New Roman", serif; white-space: nowrap; }
.wrong { position: relative; }
.caret { display: inline-block; width: 2px; height: 34px; margin: 0 -1px; vertical-align: -8px; background: #000; }
.squiggle { position: absolute; left: 0; bottom: 0; width: 100%; height: 3px; }

.context { position: absolute; left: 515px; top: 110px; width: 107px; border: 1px solid #7b7873; background: linear-gradient(90deg, #f6f5f2, #d9d6ce 19px, #fbfaf7 19px); box-shadow: 1px 1px 1px rgba(0, 0, 0, .35); }
.context ul { list-style: none; margin: 0; padding: 0; }
.context ul + ul::before { content: ""; display: block; height: 1px; margin: 1px 0 1px 25px; background: #a5a29c; }
.context button { width: 100%; height: 18px; justify-content: flex-start; }
.context button:disabled { color: #a3a19b; }
.strong { font-weight: bold; }
.slot { width: 20px; flex: none; padding-left: 3px; }
.label { flex: 1; text-align: left; padding-left: 5px; }
.sub { width: 6px; height: 8px; margin-right: 5px; }

.vscroll { width: 10px; flex: none; display: flex; flex-direction: column; overflow: hidden; }
.split { display: block; height: 4px; border-bottom: 2px solid #404040; }
.raised { background: #d6d3ce; border: 1px solid; border-color: #fff #404040 #404040 #fff; }
.vscroll .raised { width: 14px; height: 13px; justify-content: flex-start; }
.vscroll .raised svg { width: 10px; height: 10px; }
.vthumb { flex: 504; width: 14px; border: 1px solid; border-color: #fff #404040 #404040 #fff; border-bottom-width: 2px; }
.vtrack { flex: 136; background: #eeece8; }
.browse { width: 12px; height: 13px; }
.browse svg { width: 12px; height: 12px; }

.hscroll { height: 14px; flex: none; display: flex; padding: 0 10px 0 1px; border-left: 1px solid #55524f; }
.view { width: 13px; height: 13px; }
.view svg { width: 9px; height: 9px; }
.view.on { border: 1px solid #0a246a; background: #dfe3f0; }
.hscroll .raised { width: 12px; height: 13px; }
.hscroll .raised svg { width: 10px; height: 10px; }
.hthumb { flex: 1; height: 13px; margin: 0 2px 0 1px; border: 1px solid; border-color: #fff #404040 #404040 #fff; }

.status { height: 17px; flex: none; display: grid; align-items: center; padding-left: 13px; grid-template-columns: 51px 61px 39px 52px 36px 48px 27px 29px 23px 29px 64px 30px 34px 23px 26px; border-top: 1px solid #f6f4f0; white-space: pre; }
.mode { color: #a09d97; }
.proof svg { width: 17px; height: 13px; }
.empty { height: 12px; margin-right: 3px; border: 1px solid #dedbd6; }

.taskbar { height: 23px; flex: none; display: flex; align-items: center; padding-left: 6px; border-top: 1px solid #f6f4f0; font-weight: bold; }
.start { width: 42px; height: 18px; gap: 1px; border: 1px solid; border-color: #fff #404040 #404040 #fff; }
.start svg { width: 12px; height: 12px; }
.divider { width: 3px; height: 16px; flex: none; margin: 0 4px; border: 1px solid; border-color: #fff #848284 #848284 #fff; }
.launch { display: flex; width: 108px; }
.launch button { width: 18px; height: 18px; }
.task { width: 129px; height: 19px; gap: 2px; justify-content: flex-start; padding-left: 3px; border: 1px solid; border-color: #404040 #fff #fff #404040; background: #eceae7; }
.tray { margin-left: auto; display: flex; align-items: center; }
.lang { width: 13px; height: 13px; background: #0a246a; color: #fff; font-weight: normal; font-size: 8px; }
.net { width: 13px; height: 19px; display: flex; align-items: center; overflow: hidden; border: 1px solid #848284; border-right: 0; }
</style>
